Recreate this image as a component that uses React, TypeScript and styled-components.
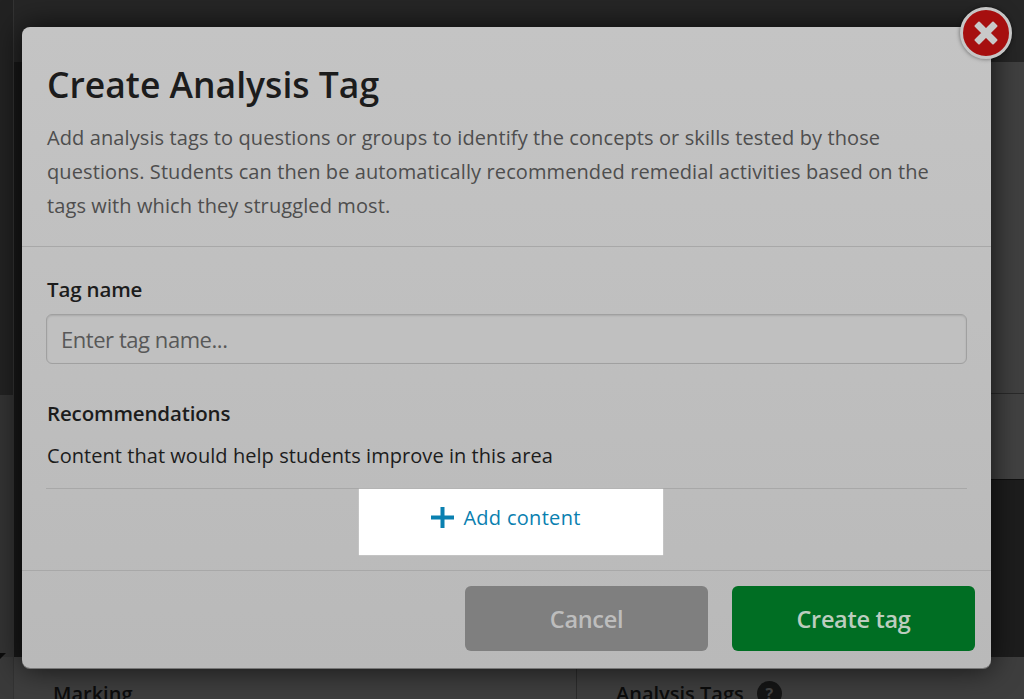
import React from "react";
import styled, { createGlobalStyle } from "styled-components";

const Global = createGlobalStyle`
  html, body { margin: 0; padding: 0; height: 100%; background: #1c1c1c; overflow: hidden; }
  * { box-sizing: border-box; }
`;

const Page = styled.div`
  width: 1024px; height: 699px; position: relative; overflow: hidden;
  display: flex;
  background: #161616;
  font-family: "Open Sans", "Noto Sans", sans-serif;
`;
const LeftRail = styled.div`
  position: relative;
  width: 14px; flex-shrink: 0; display: flex; flex-direction: column;
  border-right: 1px solid #333;
`;
const RailTop = styled.div`height: 395px; flex-shrink: 0; background: #222;`;
const RailMid = styled.div`height: 262px; flex-shrink: 0; background: #333;`;
const RailBottom = styled.div`flex: 1; background: #3a3a3a;`;
const Caret = styled.span`
  position: absolute; left: -6px; top: 653px;
  border-left: 6px solid transparent; border-right: 6px solid transparent;
  border-top: 6px solid #0c0c0c;
`;
const Main = styled.div`
  flex: 1; min-width: 0; display: flex; flex-direction: column;
`;
const TopBand = styled.div`height: 62px; flex-shrink: 0; background: #262626;`;
const Middle = styled.div`height: 595px; flex-shrink: 0; display: flex;`;
const Gutter = styled.div`width: 30px; flex-shrink: 0; background: #181818;`;
const Stack = styled.div`flex: 1; min-width: 0; display: flex; flex-direction: column;`;
const MidBand = styled.div`
  height: 332px; flex-shrink: 0; background: #404040; border-bottom: 1px solid #2a2a2a;
`;
const NarrowBand = styled.div`
  height: 86px; flex-shrink: 0; background: #424242; border-bottom: 1px solid #101010;
`;
const DarkBand = styled.div`flex: 1; background: #1d1d1d;`;
const Bottom = styled.div`
  flex: 1; min-height: 0; display: flex; background: #3e3e3e; overflow: hidden;
`;
const BottomCell = styled.div<{ $w: number }>`
  width: ${p => p.$w}px; flex-shrink: 0;
  padding: 24px 0 0 39px;
  display: flex; align-items: flex-start; gap: 13px;
  font-size: 20px; font-weight: 600; color: #0c0c0c;
  line-height: 26px; white-space: nowrap;
  border-right: 1px solid #2c2c2c;
  &:last-child { border-right: 0; flex: 1; }
`;
const Help = styled.span`
  width: 25px; height: 25px; border-radius: 50%; background: #151515; color: #444;
  display: inline-flex; align-items: center; justify-content: center; font-size: 16px; font-weight: 700;
`;

const Modal = styled.div`
  position: absolute; left: 22px; top: 27px; width: 969px; height: 641px;
  background: linear-gradient(180deg, #c4c4c4 0%, #b9b9b9 100%);
  border-radius: 8px;
  box-shadow: 0 1px 0 #777, 0 0 30px rgba(0,0,0,.75);
  display: flex; flex-direction: column;
  color: #1c1c1c;
`;
const Header = styled.header`
  height: 220px; flex-shrink: 0; padding: 33px 50px 0 25px; border-bottom: 1px solid #a8a8a8;
`;
const Title = styled.h1`
  margin: 0; font-size: 35.5px; line-height: 48px; font-weight: 600; color: #1c1c1c;
`;
const Intro = styled.p`
  margin: 13px 0 0; font-size: 20px; line-height: 34px; color: #4e4e4e; letter-spacing: 0.1px;
`;
const Body = styled.div`
  flex: 1; padding: 28px 24px 0 24px; display: flex; flex-direction: column;
`;
const Label = styled.label`
  padding-left: 1px;
  font-size: 20.5px; line-height: 28px; font-weight: 600; color: #1c1c1c; letter-spacing: -0.15px;
`;
const Input = styled.input`
  margin-top: 11px; height: 50px; width: 100%; padding: 0 14px; flex-shrink: 0;
  background: #c0c0c0; border: 1px solid #a0a0a0; border-radius: 6px;
  box-shadow: inset 0 1px 2px rgba(0,0,0,.12);
  font: 400 22px "Open Sans", sans-serif; letter-spacing: -0.45px; outline: none;
  &::placeholder { color: #585858; opacity: 1; }
`;
const RecLabel = styled(Label)`margin-top: 35px;`;
const Desc = styled.div`
  margin-top: 15px; padding-left: 1px; font-size: 20px; line-height: 28px; color: #1c1c1c; letter-spacing: 0.05px;
  padding-bottom: 18px; border-bottom: 1px solid #a8a8a8;
`;
const AddRow = styled.div`display: flex; justify-content: center;`;
const AddButton = styled.button`
  width: 304px; height: 66px; margin-left: 8px; border: 0; background: #fff; color: #0a80b0;
  box-shadow: 0 0 1px rgba(255,255,255,.8);
  display: flex; align-items: center; justify-content: center; gap: 9px;
  font: 400 20px "Open Sans", sans-serif; letter-spacing: 0.3px; padding: 0 9px 9px 0;
`;
const Footer = styled.footer`
  height: 98px; flex-shrink: 0; border-top: 1px solid #a8a8a8;
  display: flex; justify-content: flex-end; align-items: flex-start; gap: 24px;
  padding: 15px 16px 0 0;
`;
const Btn = styled.button<{ $primary?: boolean; $w: number }>`
  width: ${p => p.$w}px; height: 65px; border: 0; border-radius: 6px; padding-top: 2px;
  background: ${p => (p.$primary ? "#006e23" : "#7f7f7f")};
  color: ${p => (p.$primary ? "#bccdbf" : "#bdbdbd")};
  font: 600 23.5px "Open Sans", sans-serif; letter-spacing: -0.3px;
`;
const Close = styled.button`
  position: absolute; left: 960px; top: 7px; width: 52px; height: 52px; padding: 0;
  border-radius: 50%; background: #a60f0f; border: 3px solid #c6c6c6;
  display: flex; align-items: center; justify-content: center;
  box-shadow: 0 0 4px rgba(0,0,0,.5);
`;

export default function App() {
  return (
    <Page>
      <Global />
      <LeftRail>
        <RailTop />
        <RailMid />
        <RailBottom />
        <Caret />
      </LeftRail>
      <Main>
        <TopBand />
        <Middle>
          <Gutter />
          <Stack>
            <MidBand />
            <NarrowBand />
            <DarkBand />
          </Stack>
        </Middle>
        <Bottom>
          <BottomCell $w={563}>Marking</BottomCell>
          <BottomCell $w={447}>Analysis Tags <Help>?</Help></BottomCell>
        </Bottom>
      </Main>
      <Modal>
        <Header>
          <Title>Create Analysis Tag</Title>
          <Intro>Add analysis tags to questions or groups to identify the concepts or skills tested by those questions. Students can then be automatically recommended remedial activities based on the tags with which they struggled most.</Intro>
        </Header>
        <Body>
          <Label>Tag name</Label>
          <Input placeholder="Enter tag name..." />
          <RecLabel>Recommendations</RecLabel>
          <Desc>Content that would help students improve in this area</Desc>
          <AddRow>
            <AddButton>
              <svg width="23" height="21" viewBox="0 0 23 21"><path d="M9.5 0h4v8.5H23v4h-9.5V21h-4v-8.5H0v-4h9.5z" fill="#0a80b0" /></svg>
              Add content
            </AddButton>
          </AddRow>
        </Body>
        <Footer>
          <Btn $w={243}>Cancel</Btn>
          <Btn $primary $w={243}>Create tag</Btn>
        </Footer>
      </Modal>
      <Close aria-label="Close">
        <svg width="28" height="28" viewBox="0 0 28 28"><path d="M7 3.5 14 10.5 21 3.5 24.5 7 17.5 14 24.5 21 21 24.5 14 17.5 7 24.5 3.5 21 10.5 14 3.5 7z" fill="#c9c9c9" stroke="#c9c9c9" strokeWidth="2" strokeLinejoin="round" /></svg>
      </Close>
    </Page>
  );
}
